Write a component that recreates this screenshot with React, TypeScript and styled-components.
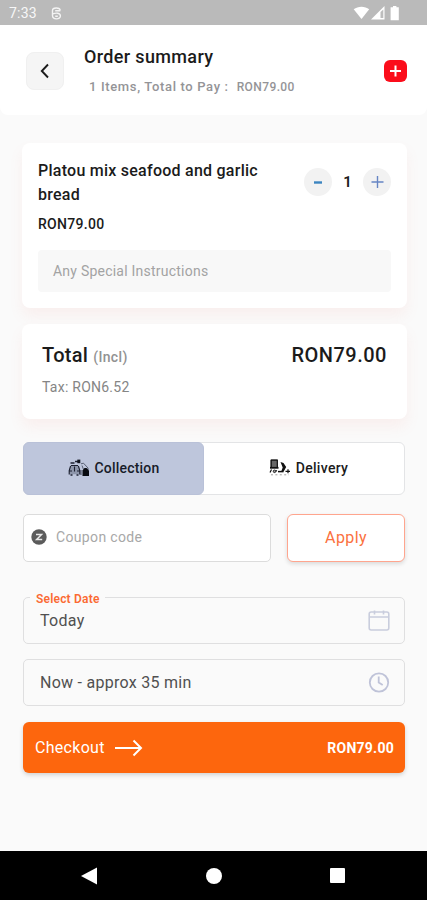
import React from "react";
import styled, { createGlobalStyle } from "styled-components";

const Global = createGlobalStyle`
  * { box-sizing: border-box; }
  body { margin: 0; background: #fafafa; font-family: Roboto, "Liberation Sans", sans-serif; }
  button, input { font: inherit; }
  svg { display: block; flex: none; }
`;

const Screen = styled.main`
  width: 427px;
  height: 900px;
  display: flex;
  flex-direction: column;
  overflow: hidden;
  background: #fafafa;
`;

const StatusBar = styled.div`
  height: 25px;
  flex: none;
  display: flex;
  align-items: center;
  justify-content: space-between;
  padding: 1px 26px 0 9px;
  background: #bababa;
`;

const Group = styled.div<{ $gap: number }>`
  display: flex;
  align-items: center;
  gap: ${(p) => p.$gap}px;
`;

const Label = styled.span<{ $size: number; $weight?: number; $color?: string; $spacing?: number; $line?: number }>`
  font-size: ${(p) => p.$size}px;
  font-weight: ${(p) => p.$weight ?? 400};
  color: ${(p) => p.$color ?? "#1b1b1b"};
  letter-spacing: ${(p) => p.$spacing ?? 0}px;
  line-height: ${(p) => p.$line ?? 20}px;
  white-space: nowrap;
`;

const Header = styled.header`
  height: 90px;
  flex: none;
  display: flex;
  align-items: flex-start;
  padding: 0 20px 0 26px;
  background: #fff;
  border-radius: 0 0 8px 8px;
`;

const BackButton = styled.button`
  width: 38px;
  height: 38px;
  margin-top: 27px;
  padding: 0;
  display: flex;
  align-items: center;
  justify-content: center;
  border: 1px solid #f0f0f0;
  border-radius: 8px;
  background: #f5f5f5;
`;

const Heading = styled.div`
  flex: 1;
  display: flex;
  flex-direction: column;
  gap: 10px;
  padding: 22px 0 0 20px;
`;

const Title = styled.h1`
  margin: 0;
  font-size: 18px;
  line-height: 20px;
  font-weight: 500;
  letter-spacing: 0.35px;
  color: #1b1b1b;
`;

const Summary = styled.div`
  display: flex;
  gap: 8px;
  padding-left: 5px;
`;

const AddButton = styled.button`
  width: 23px;
  height: 22px;
  margin-top: 35px;
  padding: 0;
  display: flex;
  align-items: center;
  justify-content: center;
  border: 0;
  border-radius: 6px;
  background: #fb0d1b;
`;

const Content = styled.div`
  flex: 1;
  display: flex;
  flex-direction: column;
  padding: 28px 22px 0 23px;
`;

const Card = styled.section<{ $height: number }>`
  height: ${(p) => p.$height}px;
  flex: none;
  margin: 0 -2px 16px -1px;
  padding: 16px 16px 0;
  border-radius: 8px;
  background: #fff;
  box-shadow: 0 8px 14px rgba(240, 130, 120, 0.09);
`;

const ItemRow = styled.div`
  display: flex;
  justify-content: space-between;
`;

const ItemName = styled.h2`
  width: 235px;
  margin: 0;
  font-size: 16px;
  line-height: 24px;
  font-weight: 500;
  letter-spacing: 0.25px;
  color: #1b1b1b;
`;

const Stepper = styled.div`
  display: flex;
  align-items: center;
  height: 28px;
  margin: 9px 0 0;
`;

const StepButton = styled.button`
  width: 28px;
  height: 28px;
  padding: 0;
  display: flex;
  align-items: center;
  justify-content: center;
  border: 0;
  border-radius: 50%;
  background: #f2f2f2;
`;

const Quantity = styled(Label)`
  width: 31px;
  text-align: center;
`;

const ItemPrice = styled.div`
  display: flex;
  margin-top: 7px;
`;

const Instructions = styled.div`
  height: 42px;
  margin-top: 16px;
  padding-left: 15px;
  display: flex;
  align-items: center;
  border-radius: 4px;
  background: #f8f8f8;
`;

const TotalRow = styled.div`
  display: flex;
  justify-content: space-between;
  align-items: baseline;
  padding: 3px 4px 0 4px;
`;

const TotalLabel = styled.div`
  display: flex;
  align-items: baseline;
  gap: 5px;
`;

const TaxRow = styled.div`
  display: flex;
  padding: 10px 0 0 4px;
`;

const Segments = styled.div`
  height: 53px;
  margin: 7px 0 19px;
  flex: none;
  display: flex;
  border: 1px solid #e3e4e6;
  border-radius: 6px;
  background: #fff;
`;

const Segment = styled.button<{ $active?: boolean }>`
  flex: ${(p) => (p.$active ? "0 0 181px" : "1")};
  margin: ${(p) => (p.$active ? "-1px 0 -1px -1px" : "0")};
  padding: ${(p) => (p.$active ? "0 0 2px" : "0 0 2px 9px")};
  display: flex;
  align-items: center;
  justify-content: center;
  gap: 5px;
  border: ${(p) => (p.$active ? "1px solid #b9c1d8" : "0")};
  border-radius: 6px;
  background: ${(p) => (p.$active ? "#bec6dc" : "transparent")};
`;

const CouponRow = styled.div`
  display: flex;
  gap: 16px;
  height: 48px;
  flex: none;
  margin-bottom: 35px;
`;

const CouponField = styled.div`
  width: 248px;
  display: flex;
  align-items: center;
  gap: 9px;
  padding: 0 0 2px 7px;
  border: 1.5px solid #dcdcdc;
  border-radius: 5px;
  background: #fff;
`;

const ApplyButton = styled.button`
  flex: 1;
  padding: 0;
  border: 1.5px solid #ffa58e;
  border-radius: 6px;
  background: #fff;
  box-shadow: 0 2px 4px rgba(0, 0, 0, 0.13);
`;

const PickerField = styled.div`
  position: relative;
  height: 47px;
  flex: none;
  margin-bottom: 15px;
  padding: 0 14px 0 16px;
  display: flex;
  align-items: center;
  justify-content: space-between;
  border: 1.5px solid #dfdfe0;
  border-radius: 5px;
`;

const FloatingLabel = styled.span`
  position: absolute;
  top: -8px;
  left: 6px;
  padding: 0 5px 0 6px;
  font-size: 12px;
  line-height: 18px;
  font-weight: 600;
  letter-spacing: 0.2px;
  color: #fb6a33;
  background: #fafafa;
`;

const CheckoutButton = styled.button`
  height: 51px;
  flex: none;
  margin-top: 1px;
  padding: 0 11px 0 12px;
  display: flex;
  align-items: center;
  justify-content: space-between;
  border: 0;
  border-radius: 6px;
  background: #fd660d;
  box-shadow: 0 2px 4px rgba(0, 0, 0, 0.16);
`;

const NavBar = styled.nav`
  height: 49px;
  flex: none;
  display: flex;
  align-items: center;
  justify-content: space-between;
  padding: 0 81px;
  background: #000;
`;

const CollectionIcon = () => (
  <svg width="22" height="18" viewBox="0 0 22 18" fill="none" stroke="#1c2030">
    <path d="M2.5 4h4M7 2.6h3" strokeWidth="1.5" />
    <path d="M9.3.6h3v3.6h-3z" fill="#10131d" stroke="none" />
    <path d="M2.5 6.8h8l1.5 4.5v4H1v-4z" fill="#8d95aa" stroke="none" />
    <path d="M3 6.5h7M2.6 7L1.2 11.5v4M10.4 7l1.4 4.5v4M6.5 7.5v5M1.5 12h2.5M9 12h2.5" strokeWidth="1.1" />
    <path d="M2.5 16h2M8.5 16h2" strokeWidth="1.6" />
    <path d="M13 4.8l2.5-.6L20 9v2.5M14 6.5l1.5 4" strokeWidth=".9" stroke="#4e5568" />
    <path d="M14.5 11.5l2-2.5h2l2.5 2.5V17h-6.5z" fill="#080a10" stroke="none" />
    <path d="M13 11v5" strokeWidth=".8" />
  </svg>
);

const DeliveryIcon = () => (
  <svg width="22" height="17" viewBox="0 0 22 17" fill="none" stroke="#111">
    <path d="M1.5.5H9v8H1.5z" fill="#666" stroke="none" />
    <path d="M2 1.2h6.5M2.2 1v7M8.3 1v7" strokeWidth="1.2" />
    <path d="M1 8.8h8.5" strokeWidth="1.8" />
    <path d="M2.5 10.5L1 13.5M5 13l3-1.5" strokeWidth="1.2" />
    <circle cx="5.5" cy="12.3" r="1.3" fill="#999" strokeWidth=".8" />
    <path d="M11.5 3l3 1 2.7 4-2.5 4.5h-2.5l1.5-4z" fill="#111" stroke="none" />
    <path d="M9 12.6h5.5" strokeWidth="1.5" />
    <path d="M16.5 12.4h4.5M19 10.2v4" strokeWidth="1.2" />
    <path d="M2 15.8h18" strokeWidth=".8" strokeDasharray="2 2.4" stroke="#888" />
  </svg>
);

export default function App() {
  return (
    <>
      <Global />
      <Screen>
        <StatusBar>
          <Group $gap={14}>
            <Label $size={14} $color="#f7f7f7" $spacing={0.2}>7:33</Label>
            <svg width="11" height="13" viewBox="0 0 11 13" fill="none" stroke="#f4f4f4" strokeWidth="1.4">
              <path d="M9.2 3.6C9 .3 1.6.1 1.5 3.6v5.2c.2 4.1 7.9 4.1 7.9.2 0-3.3-4.4-3.3-7.6-2.2M9.3 3.8H4.2M4.2 9.2h2.6" />
            </svg>
          </Group>
          <Group $gap={1}>
            <svg width="17" height="14" viewBox="0 0 17 14" fill="#fff"><path d="M.7 3.3C5-.2 12-.2 16.2 3.3L8.5 13z" /></svg>
            <svg width="14" height="14" viewBox="0 0 14 14"><path d="M0 13.5L13.5 0v13.5z" fill="#fff" /><path d="M9.5 6v6h2.8V3.5z" fill="#bdbdbd" /></svg>
            <svg width="15" height="15" viewBox="0 0 15 15" fill="#fff"><path d="M7 0h3.4v1.3h2.4v13H4.6v-13H7z" /></svg>
          </Group>
        </StatusBar>

        <Header>
          <BackButton aria-label="Back">
            <svg width="12" height="16" viewBox="0 0 12 16" fill="none" stroke="#1b1b1b" strokeWidth="1.9"><path d="M9 1.5L2.8 8 9 14.5" /></svg>
          </BackButton>
          <Heading>
            <Title>Order summary</Title>
            <Summary>
              <Label $size={13} $weight={500} $color="#949497" $spacing={0.65}>1 Items, Total to Pay :</Label>
              <Label $size={12} $weight={500} $color="#949497" $spacing={0.4}>RON79.00</Label>
            </Summary>
          </Heading>
          <AddButton aria-label="Add">
            <svg width="13" height="12" viewBox="0 0 13 12" stroke="#fff" strokeWidth="2"><path d="M6.5 .5v11M1 6h11" /></svg>
          </AddButton>
        </Header>

        <Content>
          <Card $height={165}>
            <ItemRow>
              <ItemName>Platou mix seafood and garlic bread</ItemName>
              <Stepper>
                <StepButton aria-label="Decrease">
                  <svg width="10" height="4" viewBox="0 0 10 4"><path d="M1 2.5h8" stroke="#3b85c0" strokeWidth="2.4" /></svg>
                </StepButton>
                <Quantity $size={15} $weight={600}>1</Quantity>
                <StepButton aria-label="Increase">
                  <svg width="13" height="13" viewBox="0 0 13 13" stroke="#6685c4" strokeWidth="1.4"><path d="M6.5 0v12M.5 6h12" /></svg>
                </StepButton>
              </Stepper>
            </ItemRow>
            <ItemPrice><Label $size={14} $weight={500} $spacing={0.3}>RON79.00</Label></ItemPrice>
            <Instructions><Label $size={14} $color="#a3a3a3" $spacing={0.23}>Any Special Instructions</Label></Instructions>
          </Card>

          <Card $height={95}>
            <TotalRow>
              <TotalLabel>
                <Label $size={20} $weight={500} $line={24} $spacing={0.3}>Total</Label>
                <Label $size={14} $weight={500} $color="#929292" $line={20} $spacing={0.35}>(Incl)</Label>
              </TotalLabel>
              <Label $size={20} $weight={500} $line={24} $spacing={0.5}>RON79.00</Label>
            </TotalRow>
            <TaxRow><Label $size={14} $color="#858585" $spacing={0.25}>Tax: RON6.52</Label></TaxRow>
          </Card>

          <Segments>
            <Segment $active>
              <CollectionIcon />
              <Label $size={14} $weight={500} $color="#171b29" $spacing={0.2}>Collection</Label>
            </Segment>
            <Segment>
              <DeliveryIcon />
              <Label $size={14} $weight={500} $spacing={0.3}>Delivery</Label>
            </Segment>
          </Segments>

          <CouponRow>
            <CouponField>
              <svg width="16" height="16" viewBox="0 0 16 16"><circle cx="8" cy="8" r="7.7" fill="#5b5b5b" /><path d="M5 5.4h5.6l-5 5.2h5.6" fill="none" stroke="#e8e8e8" strokeWidth="1.5" /></svg>
              <Label $size={14} $color="#a8a8a8" $spacing={0.35}>Coupon code</Label>
            </CouponField>
            <ApplyButton><Label $size={16} $color="#fb7140" $spacing={0.4}>Apply</Label></ApplyButton>
          </CouponRow>

          <PickerField>
            <FloatingLabel>Select Date</FloatingLabel>
            <Label $size={16} $color="#505050" $spacing={0.3}>Today</Label>
            <svg width="22" height="22" viewBox="0 0 22 22" fill="none" stroke="#c9cddd" strokeWidth="1.6"><rect x="1.2" y="2" width="19.6" height="18" rx="2" /><path d="M1 7h20M6.5 .5v4M15.5 .5v4" /></svg>
          </PickerField>
          <PickerField>
            <Label $size={16} $color="#505050" $spacing={0.27}>Now - approx 35 min</Label>
            <svg width="22" height="22" viewBox="0 0 22 22" fill="none" stroke="#bfc3d8" strokeWidth="1.8"><circle cx="11" cy="10.5" r="9.2" /><path d="M10.7 4.5v6l4 2.5" /></svg>
          </PickerField>
          <CheckoutButton>
            <Group $gap={10}>
              <Label $size={16} $color="#fff" $spacing={0.3}>Checkout</Label>
              <svg width="28" height="18" viewBox="0 0 28 18" fill="none" stroke="#fff" strokeWidth="2"><path d="M0 9h26M18.5 1.5L26 9l-7.5 7.5" /></svg>
            </Group>
            <Label $size={14} $weight={700} $color="#fff" $spacing={0.25}>RON79.00</Label>
          </CheckoutButton>
        </Content>

        <NavBar>
          <svg width="17" height="18" viewBox="0 0 17 18" fill="#fff"><path d="M0 9L16 .5v17z" /></svg>
          <svg width="16" height="16" viewBox="0 0 16 16" fill="#fff"><circle cx="8" cy="8" r="8" /></svg>
          <svg width="17" height="16" viewBox="0 0 17 16" fill="#fff"><rect x="1" y="0" width="15" height="15" rx="1" /></svg>
        </NavBar>
      </Screen>
    </>
  );
}
